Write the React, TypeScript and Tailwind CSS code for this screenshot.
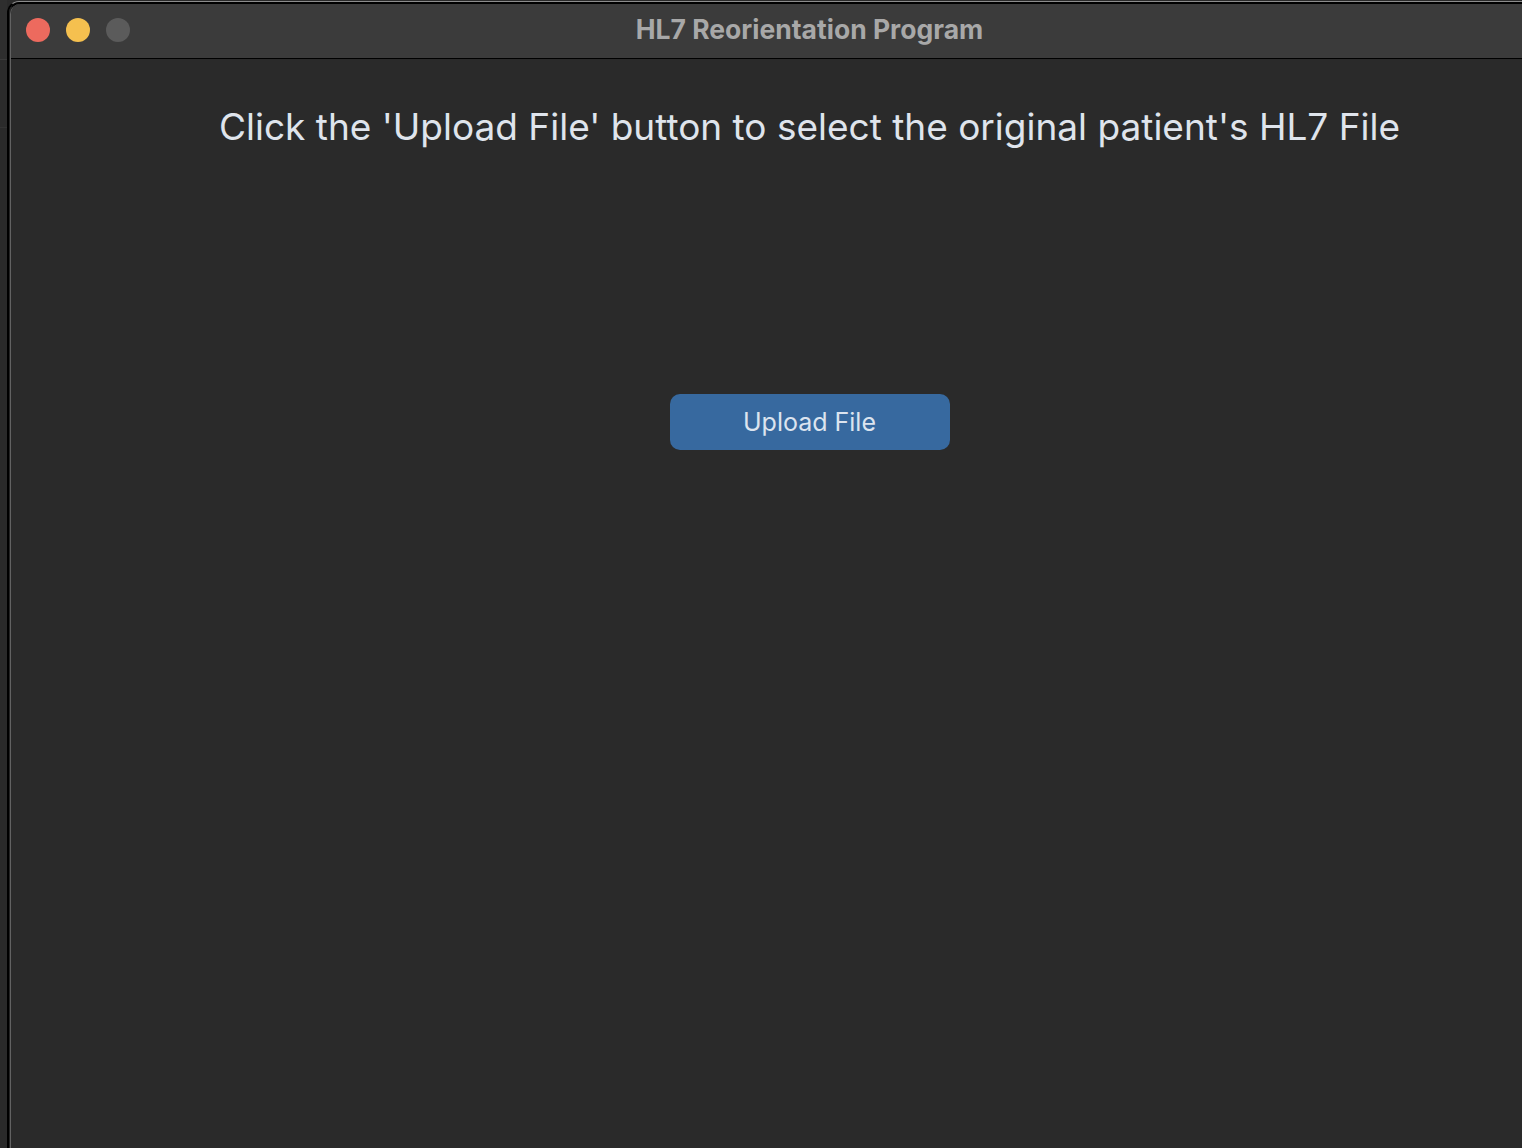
const font = { fontFamily: 'Inter, "Noto Sans", sans-serif' };

function TrafficLights() {
    return (
        <div className="mb-[2px] flex items-center gap-[16px] pl-[15px]">
            <span className="block h-[24px] w-[24px] rounded-full bg-[#ed6a5e]" />
            <span className="block h-[24px] w-[24px] rounded-full bg-[#f5c04f]" />
            <span className="block h-[24px] w-[24px] rounded-full bg-[#5b5b5b]" />
        </div>
    );
}

export default function App() {
    return (
        <div className="flex h-[1148px] w-[1522px] overflow-hidden bg-[#2a2a2a]" style={font}>
            {/* window behind, peeking out on the left */}
            <div className="flex w-[7px] shrink-0 flex-col">
                <div className="h-[60px] border-b border-[#3a3a3a] bg-[#2e2e2e]" />
                <div className="h-[68px] border-b border-[#333] bg-[#2b2b2b]" />
                <div className="flex-1 bg-[#2a2a2a]" />
            </div>

            <div className="mt-[1px] w-[1601px] shrink-0 rounded-tl-[12px] border-l-2 border-t border-l-black border-t-[#8c8c8c]">
                <div className="h-full rounded-tl-[11px] border-l border-t-2 border-l-[#242424] border-t-black">
                    <div className="flex h-full flex-col rounded-tl-[10px] border-l border-l-[#626262] bg-[#2a2a2a]">
                        <div className="grid h-[54px] grid-cols-[1fr_auto_1fr] items-center rounded-tl-[10px] bg-[#3b3b3b]">
                            <TrafficLights />
                            <h1 className="mb-[5px] text-[26.5px] leading-[32px] font-bold text-[#a8a8a8]">HL7 Reorientation Program</h1>
                            <div />
                        </div>
                        <div className="h-px bg-black" />

                        <div className="flex flex-col items-center">
                            <p className="mt-[46px] text-[37px] leading-[44px] text-[#dfe4ec]">
                                Click the 'Upload File' button to select the original patient's HL7 File
                            </p>
                            <button className="mt-[245px] h-[56px] w-[280px] rounded-[10px] bg-[#37699f] pt-[2px] text-[25px] text-[#dce4ef]">
                                Upload File
                            </button>
                        </div>
                    </div>
                </div>
            </div>
        </div>
    );
}
